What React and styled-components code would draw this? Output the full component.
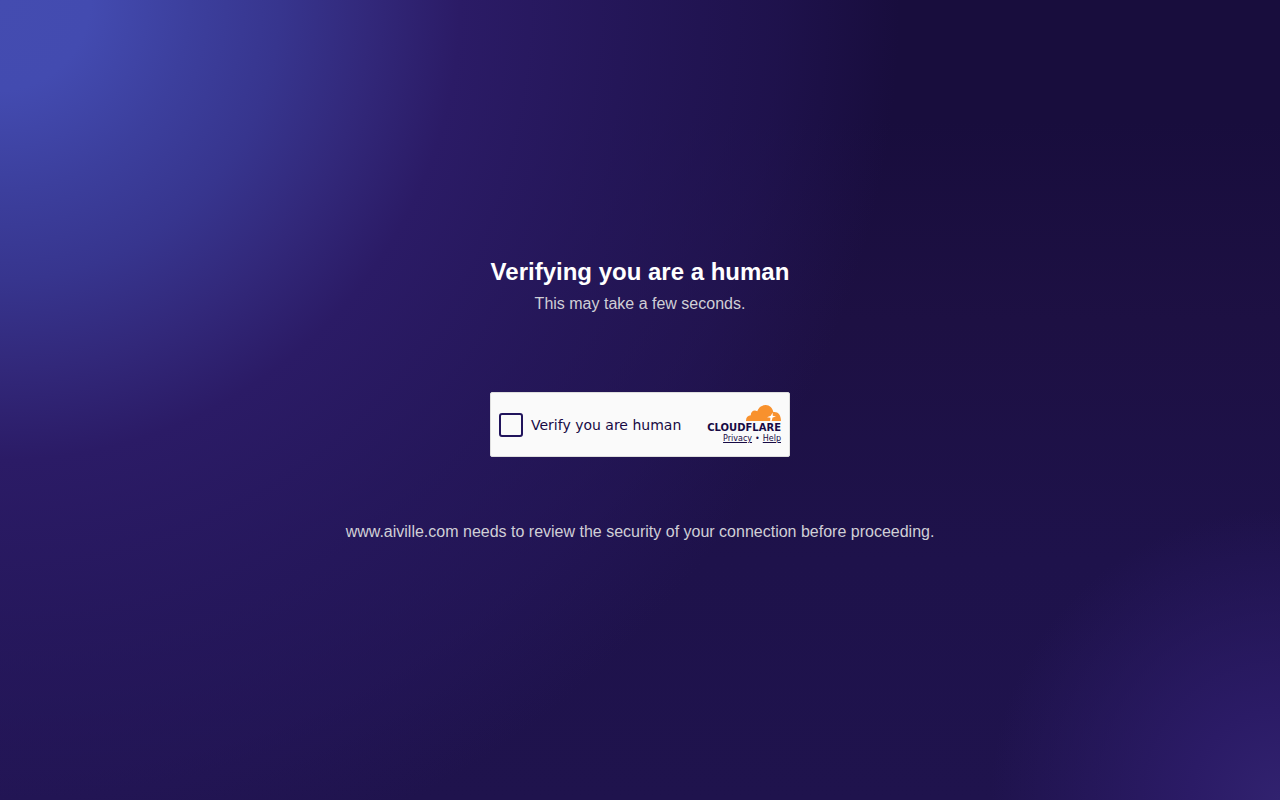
import React from "react";
import styled, { createGlobalStyle } from "styled-components";

const GlobalStyle = createGlobalStyle`
  * { box-sizing: border-box; }
  body {
    margin: 0;
    font-family: "Liberation Sans", Arial, sans-serif;
  }
`;

const Page = styled.main`
  min-height: 100vh;
  display: flex;
  flex-direction: column;
  align-items: center;
  justify-content: center;
  text-align: center;
  background:
    radial-gradient(circle at 0 0,
      #444cb0 0,
      #434bb0 90px,
      #3c3f9d 190px,
      #37358e 280px,
      #32287a 370px,
      #2b1b66 460px,
      rgba(41, 26, 100, 0.66) 640px,
      rgba(40, 25, 98, 0.4) 780px,
      rgba(40, 25, 98, 0) 900px),
    radial-gradient(circle at 100% 100%,
      #31226f 0,
      #2b1b66 90px,
      rgba(43, 27, 102, 0) 290px),
    linear-gradient(#180d3d 15%, #1d1043 40%, #1e124b 70%, #1f134d);
`;

const Title = styled.h1`
  margin: 0 0 4px;
  font-size: 24px;
  line-height: 32px;
  font-weight: 700;
  color: #ffffff;
`;

const Note = styled.p`
  margin: 0;
  font-size: 16px;
  line-height: 24px;
  color: #d0cfd6;
`;

const Widget = styled.section`
  width: 300px;
  max-width: 100%;
  min-height: 65px;
  margin: 76px 0 63px;
  padding: 0 8px;
  display: flex;
  align-items: center;
  justify-content: space-between;
  background: #fafafa;
  border: 1px solid #dedede;
  border-radius: 2px;
  color: #170a44;
  font-family: "DejaVu Sans", sans-serif;
`;

const CheckLabel = styled.label`
  display: flex;
  align-items: center;
  gap: 8px;
  font-size: 14px;
  line-height: 20px;
  cursor: pointer;
`;

const Checkbox = styled.input`
  appearance: none;
  width: 24px;
  height: 24px;
  margin: 0;
  border: 2px solid #21145c;
  border-radius: 3px;
  background: #fafafa;

  &:checked { background: #21145c; }
`;

const Brand = styled.div`
  display: flex;
  flex-direction: column;
  align-items: flex-end;
`;

const Cloud = styled.svg`
  display: block;
  width: 35px;
  height: 17px;
`;

const Wordmark = styled.span`
  font-size: 10px;
  line-height: 12px;
  font-weight: 700;
`;

const Links = styled.nav`
  display: flex;
  gap: 3px;
  font-size: 8px;
  line-height: 10px;
`;

const TextLink = styled.a`
  color: inherit;
  text-decoration: underline;
`;

export default function App() {
  return (
    <>
      <GlobalStyle />
      <Page>
        <Title>Verifying you are a human</Title>
        <Note>This may take a few seconds.</Note>
        <Widget>
          <CheckLabel>
            <Checkbox type="checkbox" />
            Verify you are human
          </CheckLabel>
          <Brand>
            <Cloud viewBox="0 0 35 17" aria-hidden="true">
              <path
                fill="#f8912d"
                d="M0 16C-.1 12.6 1.8 10.4 4.8 10.3C4.6 6.6 8 4.4 11.2 6.2C12.8 2 16 0 19.8.1C23.6.3 26.6 3 27.3 7C31.8 6.4 35 9.5 35 16Z"
              />
              <path
                fill="#ffffff"
                d="M26.6 7.4L26.8 10.8L30 11.5L26.6 12.6L25.6 16L24.2 16L24.4 12.8L21 12.2L24.8 10.8Z"
              />
            </Cloud>
            <Wordmark>CLOUDFLARE</Wordmark>
            <Links>
              <TextLink href="#privacy">Privacy</TextLink>
              <span>•</span>
              <TextLink href="#help">Help</TextLink>
            </Links>
          </Brand>
        </Widget>
        <Note>www.aiville.com needs to review the security of your connection before proceeding.</Note>
      </Page>
    </>
  );
}
